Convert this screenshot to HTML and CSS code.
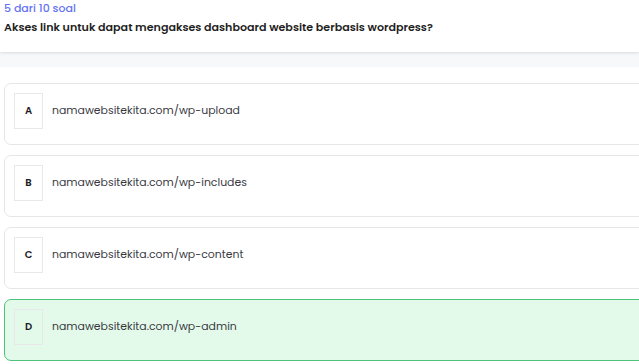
FILE: index.html
```html
<!DOCTYPE html>
<html lang="id">
<head>
<meta charset="utf-8">
<title>Soal</title>
<link rel="stylesheet" href="styles.css">
</head>
<body>
<header class="head">
  <div class="count">5 dari 10 soal</div>
  <div class="question">Akses link untuk dapat mengakses dashboard website berbasis wordpress?</div>
</header>
<div class="band"></div>
<main class="options">
  <div class="opt"><span class="key">A</span><span class="txt">namawebsitekita.com/wp-upload</span></div>
  <div class="opt"><span class="key">B</span><span class="txt">namawebsitekita.com/wp-includes</span></div>
  <div class="opt"><span class="key">C</span><span class="txt">namawebsitekita.com/wp-content</span></div>
  <div class="opt opt-correct"><span class="key">D</span><span class="txt">namawebsitekita.com/wp-admin</span></div>
</main>
</body>
</html>
```
FILE: styles.css
```css
html, body {
  margin: 0;
  padding: 0;
  background: #ffffff;
  overflow: hidden;
  font-family: "Poppins", "DejaVu Sans", sans-serif;
}
.head {
  height: 52px;
  box-sizing: border-box;
  padding: 2px 4px 0;
  background: #fff;
  box-shadow: 0 1px 3px rgba(0,0,0,0.12);
  position: relative;
  z-index: 1;
}
.count {
  color: #6473f3;
  font-size: 11px;
  line-height: 13px;
  font-weight: 500;
}
.question {
  margin-top: 5px;
  color: #1f1f24;
  font-size: 11.1px;
  font-weight: 600;
  line-height: 15px;
}
.band {
  height: 15px;
  background: #f7f8fa;
}
.options {
  display: flex;
  flex-direction: column;
  gap: 10px;
  padding: 16px 0 0 4px;
  width: 680px;
}
.opt {
  height: 62px;
  box-sizing: border-box;
  border: 1px solid #e6e6e9;
  border-radius: 7px;
  padding: 9px 0 0 9px;
  display: flex;
  align-items: flex-start;
  background: #fff;
}
.opt-correct {
  background: #e3faea;
  border-color: #4ec27a;
}
.key {
  display: flex;
  align-items: center;
  justify-content: center;
  height: 36px;
  min-width: 29px;
  box-sizing: border-box;
  padding: 0 9px;
  border: 1px solid #e8e8ec;
  font-size: 10px;
  font-weight: 600;
  color: #1c1c24;
}
.txt {
  margin-left: 9px;
  line-height: 36px;
  font-size: 10.9px;
  color: #3a3a44;
}
```
